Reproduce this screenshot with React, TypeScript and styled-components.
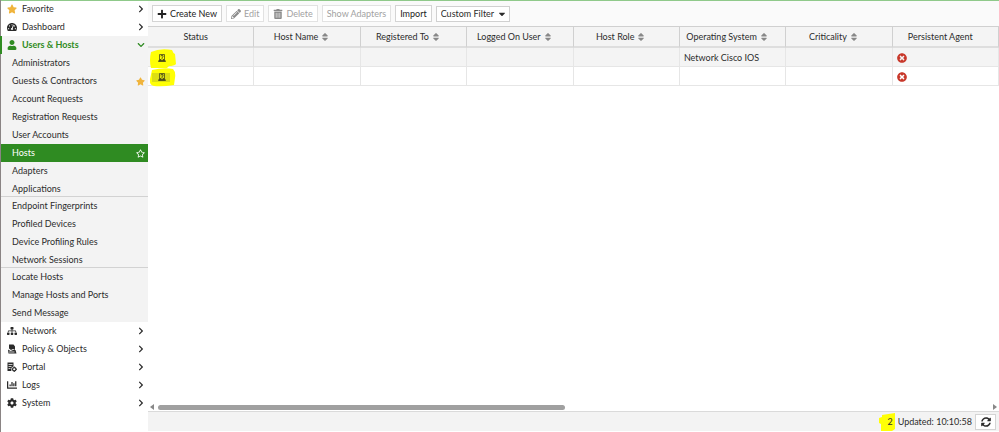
import React from "react";
import styled, { createGlobalStyle, css } from "styled-components";
import {
  FaCaretDown, FaChartBar, FaChevronDown, FaChevronRight, FaCog, FaPencilAlt, FaPlus, FaRegStar,
  FaSitemap, FaSort, FaStar, FaSyncAlt, FaTachometerAlt, FaTimesCircle, FaTrashAlt, FaUser,
} from "react-icons/fa";

const green = "#2f8b22";

const Global = createGlobalStyle`
  * { box-sizing: border-box; }
  body { margin: 0; background: #fff; color: #2c2c2c; font: 9px/18px Lato, "Open Sans", sans-serif; }
  button, select { font: inherit; color: inherit; margin: 0; }
  a { color: inherit; text-decoration: none; }
  svg { display: block; flex: none; }
`;

const Page = styled.div`
  display: flex;
  min-height: 100vh;
  box-shadow: inset 0 1px #8fc98a;
`;

const Sidebar = styled.nav`
  flex: none;
  width: 148px;
  border-left: 1px solid #8a8484;
`;

const Section = styled.button<{ $open?: boolean }>`
  display: flex;
  align-items: center;
  gap: 5px;
  width: 100%;
  height: 18px;
  padding: 0 3px 0 6px;
  border: 0;
  background: transparent;
  text-align: left;
  svg { color: #2b2b2b; }
  ${(p) => p.$open && css`
    color: ${green};
    background: #f3f3f3;
    font-weight: 700;
    box-shadow: -1px 0 ${green}, inset 1px 0 ${green};
    svg { color: ${green}; }
  `}
`;

const IconSlot = styled.span<{ $gold?: boolean }>`
  display: flex;
  justify-content: center;
  width: 10px;
  svg { ${(p) => p.$gold && "color: #f0b43c;"} }
`;

const Label = styled.span`
  flex: 1;
  white-space: nowrap;
`;

const Group = styled.ul`
  margin: 0;
  padding: 0;
  list-style: none;
  background: #f3f3f3;
  & + & {
    margin-top: -2px;
    border-top: 1px solid #d2d2d2;
  }
`;

const SubLink = styled.a<{ $active?: boolean }>`
  display: flex;
  align-items: center;
  height: 18px;
  padding: 0 3px 0 11px;
  ${(p) => p.$active && css`background: ${green}; color: #fff;`}
`;

const Main = styled.main`
  flex: 1;
  min-width: 0;
  display: flex;
  flex-direction: column;
  padding-top: 1px;
`;

const Toolbar = styled.div`
  display: flex;
  align-items: center;
  gap: 4px;
  height: 25px;
  padding: 0 4px;
  background: #fafafa;
`;

const ToolButton = styled.button`
  display: flex;
  align-items: center;
  gap: 3px;
  height: 17px;
  padding: 0 4px;
  border: 1px solid #d4d4d4;
  background: #fff;
  line-height: 15px;
  white-space: nowrap;
  color: #222;
  &:disabled { color: #a2a2a2; border-color: #e2e2e2; }
  &:disabled svg { color: #8a8a8a; }
`;

const FilterBox = styled.div`
  position: relative;
  svg { position: absolute; right: 3px; top: 3px; pointer-events: none; }
`;

const FilterSelect = styled.select`
  appearance: none;
  display: block;
  height: 16px;
  padding: 0 14px 0 4px;
  border: 1px solid #d0d0d0;
  border-radius: 0;
  background: #fff;
  line-height: 14px;
`;

const TableArea = styled.div`
  flex: 1;
`;

const Table = styled.table`
  width: 100%;
  table-layout: fixed;
  border-collapse: separate;
  border-spacing: 0;
`;

const HeadCell = styled.th`
  height: 22px;
  padding: 1px 10px 0 0;
  font-weight: 400;
  line-height: 18px;
  background: #f4f4f4;
  border: solid #d0d0d0;
  border-width: 1px 1px 2px 0;
  border-bottom-color: #dedede;
`;

const SortButton = styled.button`
  display: flex;
  align-items: center;
  justify-content: center;
  gap: 2px;
  width: 100%;
  padding: 0;
  border: 0;
  background: transparent;
  white-space: nowrap;
  svg { color: #888; }
`;

const BodyRow = styled.tr<{ $shaded?: boolean }>`
  background: ${(p) => (p.$shaded ? "#f4f4f4" : "#fff")};
`;

const Cell = styled.td`
  height: 19px;
  padding: 1px 4px 0;
  line-height: 17px;
  border: solid #e6e6e6;
  border-width: 0 1px 1px 0;
  white-space: nowrap;
`;

const Marked = styled.span`
  position: relative;
  display: block;
  padding-left: 6px;
  > svg { position: relative; }
  > svg:first-child { position: absolute; left: -2px; top: -6px; }
`;

const AgentIcon = styled.span`
  display: block;
  color: #c8382b;
`;

const ScrollRow = styled.div`
  display: flex;
  align-items: center;
  justify-content: space-between;
  height: 8px;
  padding: 0 2px;
`;

const Track = styled.div`
  flex: 1;
  margin: 0 4px;
`;

const Thumb = styled.div`
  width: 49%;
  height: 5px;
  border-radius: 3px;
  background: #a0a0a0;
`;

const Footer = styled.footer`
  display: flex;
  align-items: center;
  justify-content: flex-end;
  gap: 3px;
  height: 20px;
  padding-right: 3px;
  margin-bottom: 1px;
  background: #f3f3f3;
  border-top: 1px solid #dadada;
`;

const Count = styled.span`
  position: relative;
  padding-right: 2px;
  > svg { position: absolute; left: -8px; top: 0; }
  > span { position: relative; }
`;

const Refresh = styled.button`
  display: flex;
  align-items: center;
  justify-content: center;
  width: 21px;
  height: 16px;
  padding: 0;
  border: 1px solid #d4d4d4;
  background: #fff;
`;

function PolicyIcon() {
  return (
    <svg width="10" height="10" viewBox="0 0 20 20" fill="currentColor">
      <path d="M4 1h9l3 4v7l-4-2-4 2-4-3z" />
      <path d="M2 11l5 3 5-2h5l2 7H3z" />
      <path d="M4 16h11" stroke="#fff" strokeWidth="1.5" />
    </svg>
  );
}

function PortalIcon() {
  return (
    <svg width="10" height="10" viewBox="0 0 20 20">
      <path d="M1 1h12v8a6 6 0 0 0-4 9H1z" fill="currentColor" />
      <path d="M3 5h8M3 9h6M3 13h4" stroke="#fff" strokeWidth="1.5" />
      <circle cx="14.5" cy="14.5" r="3.4" fill="none" stroke="currentColor" strokeWidth="2.4" />
      <path d="M14.5 9v2M14.5 18v2M9 14.5h2M18 14.5h2" stroke="currentColor" strokeWidth="2" />
    </svg>
  );
}

function HostIcon() {
  return (
    <svg width="8" height="8" viewBox="0 0 16 16" fill="none" stroke="#4a4a1c" strokeWidth="1.6">
      <path d="M3 11V1h10v10" />
      <path d="M6 5V3h4v3L8 7v3" />
      <path d="M1 15l2-4h3l2 2 2-2h3l2 4z" fill="#4a4a1c" />
    </svg>
  );
}

function RowHighlight({ second }: { second?: boolean }) {
  return second ? (
    <svg width="27" height="22" viewBox="0 0 27 22">
      <path d="M2 3Q14 0 23 2Q26 5 25 11L24 18Q12 20 4 19Q-1 18 0 12Z" fill="#ffff05" />
      <path d="M2 6H20V15H2Z" fill="#dddf13" />
    </svg>
  ) : (
    <svg width="27" height="22" viewBox="0 0 27 22">
      <path d="M1 4Q10 0 22 2Q23 5 25 6L26 16Q24 18 19 18L17 20H1Q-1 12 1 4Z" fill="#ffff05" />
    </svg>
  );
}

const groups = [
  ["Administrators", "Guests & Contractors", "Account Requests", "Registration Requests", "User Accounts", "Hosts", "Adapters", "Applications"],
  ["Endpoint Fingerprints", "Profiled Devices", "Device Profiling Rules", "Network Sessions"],
  ["Locate Hosts", "Manage Hosts and Ports", "Send Message"],
];

const lowerSections = [
  { label: "Network", icon: <FaSitemap size={10} /> },
  { label: "Policy & Objects", icon: <PolicyIcon /> },
  { label: "Portal", icon: <PortalIcon /> },
  { label: "Logs", icon: <FaChartBar size={10} /> },
  { label: "System", icon: <FaCog size={10} /> },
];

const columns = [
  { label: "Status" },
  { label: "Host Name", sort: true },
  { label: "Registered To", sort: true },
  { label: "Logged On User", sort: true },
  { label: "Host Role", sort: true },
  { label: "Operating System", sort: true },
  { label: "Criticality", sort: true },
  { label: "Persistent Agent" },
];

const hosts = [{ os: "Network Cisco IOS" }, { os: "" }];

function NavSection({ label, icon, gold, open }: { label: string; icon: React.ReactNode; gold?: boolean; open?: boolean }) {
  return (
    <Section $open={open} aria-expanded={!!open}>
      <IconSlot $gold={gold}>{icon}</IconSlot>
      <Label>{label}</Label>
      {open ? <FaChevronDown size={8} /> : <FaChevronRight size={8} />}
    </Section>
  );
}

export default function App() {
  return (
    <>
      <Global />
      <Page>
        <Sidebar>
          <NavSection label="Favorite" icon={<FaStar size={10} />} gold />
          <NavSection label="Dashboard" icon={<FaTachometerAlt size={10} />} />
          <NavSection label="Users & Hosts" icon={<FaUser size={10} />} open />
          {groups.map((items, i) => (
            <Group key={i}>
              {items.map((item) => (
                <li key={item}>
                  <SubLink href="#" $active={item === "Hosts"}>
                    <Label>{item}</Label>
                    {item === "Hosts" && <IconSlot><FaRegStar size={9} /></IconSlot>}
                    {item === "Guests & Contractors" && <IconSlot $gold><FaStar size={9} /></IconSlot>}
                  </SubLink>
                </li>
              ))}
            </Group>
          ))}
          {lowerSections.map((s) => <NavSection key={s.label} {...s} />)}
        </Sidebar>
        <Main>
          <Toolbar>
            <ToolButton><FaPlus size={10} />Create New</ToolButton>
            <ToolButton disabled><FaPencilAlt size={10} />Edit</ToolButton>
            <ToolButton disabled><FaTrashAlt size={10} />Delete</ToolButton>
            <ToolButton disabled>Show Adapters</ToolButton>
            <ToolButton>Import</ToolButton>
            <FilterBox>
              <FilterSelect aria-label="Filter"><option>Custom Filter</option></FilterSelect>
              <FaCaretDown size={10} />
            </FilterBox>
          </Toolbar>
          <TableArea>
            <Table>
              <thead>
                <tr>
                  {columns.map((c) => (
                    <HeadCell key={c.label} scope="col">
                      {c.sort ? <SortButton>{c.label}<FaSort size={10} /></SortButton> : c.label}
                    </HeadCell>
                  ))}
                </tr>
              </thead>
              <tbody>
                {hosts.map((host, i) => (
                  <BodyRow key={i} $shaded={i === 0}>
                    <Cell><Marked><RowHighlight second={i === 1} /><HostIcon /></Marked></Cell>
                    <Cell /><Cell /><Cell /><Cell />
                    <Cell>{host.os}</Cell>
                    <Cell />
                    <Cell><AgentIcon><FaTimesCircle size={10} /></AgentIcon></Cell>
                  </BodyRow>
                ))}
              </tbody>
            </Table>
          </TableArea>
          <ScrollRow>
            <svg width="4" height="6" viewBox="0 0 4 6"><path d="M4 0v6L0 3z" fill="#888" /></svg>
            <Track><Thumb /></Track>
            <svg width="4" height="6" viewBox="0 0 4 6"><path d="M0 0v6l4-3z" fill="#888" /></svg>
          </ScrollRow>
          <Footer>
            <Count>
              <svg width="17" height="19" viewBox="0 0 17 19"><path d="M3 2L16 0V16L13 18H2V11L0 10V5L3 4Z" fill="#ffff05" /></svg>
              <span>2</span>
            </Count>
            <span>Updated: 10:10:58</span>
            <Refresh aria-label="Refresh"><FaSyncAlt size={10} /></Refresh>
          </Footer>
        </Main>
      </Page>
    </>
  );
}
